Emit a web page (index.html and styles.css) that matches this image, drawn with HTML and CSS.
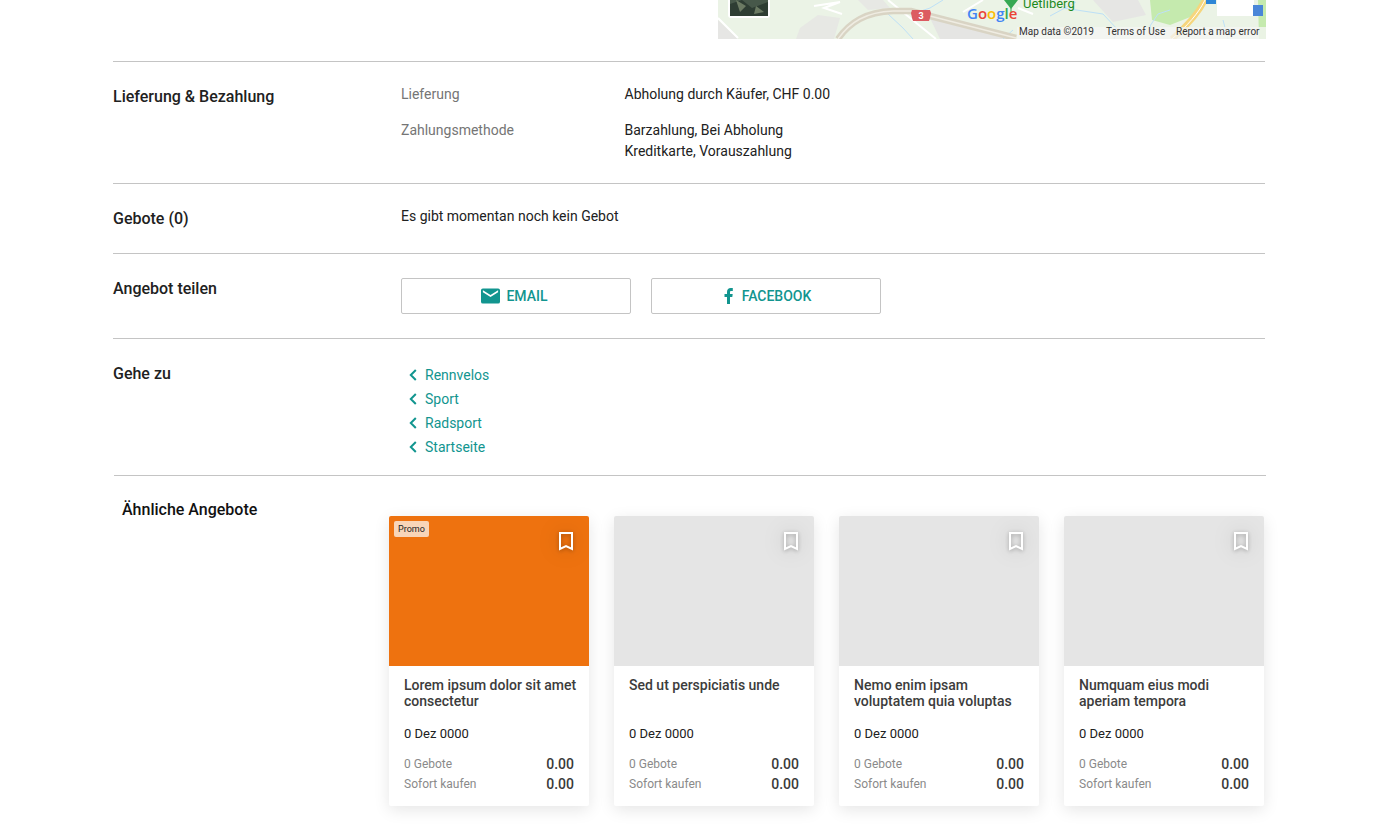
FILE: index.html
```html
<!DOCTYPE html>
<html lang="de">
<head>
    <meta charset="UTF-8">
    <title>Angebot</title>
    <link rel="stylesheet" href="styles.css">
</head>
<body>
    <div class="page">
        <div class="map-row">
            <svg class="map" width="548" height="39" viewBox="0 0 548 39">
                <rect width="548" height="39" fill="#ebf3e6"/>
                <!-- grey built up areas -->
                <path d="M0 20 L20 39 H0 Z" fill="#e6e6e4"/>
                <path d="M82 28 L100 15 L122 18 L116 39 H78 Z" fill="#e7e8e4"/>
                <path d="M212 18 L298 38 V39 H222 Z" fill="#e5e5e3"/>
                <path d="M140 0 H165 L172 8 L150 10 Z" fill="#e7e8e4"/>
                <path d="M375 0 H420 L428 15 L395 22 Z" fill="#e6e6e4"/>
                <path d="M432 0 H487 L480 14 L452 25 L434 20 Z" fill="#c5eaae"/>
                <path d="M540 0 H548 V39 H541 Z" fill="#c5eaae"/>
                <!-- small roads -->
                <path d="M0 18 L20 38 M96 6 L122 2 L106 8 L124 14 M170 0 L218 39 M315 14 L300 8 M265 0 L245 12" stroke="#fff" stroke-width="2" fill="none"/>
                <!-- rivers -->
                <path d="M170 14 L185 28 L195 39 M225 0 L212 8 L200 12 M332 16 L358 2 M345 8 L385 14 L400 30 L396 39 M295 30 L285 39 M438 39 L432 26 L440 14 L452 10 M505 20 L510 39" stroke="#bde0f7" stroke-width="1" fill="none"/>
                <!-- motorway -->
                <path d="M120 39 C132 22 148 12 175 11 L193 11 L212 16 L298 38" stroke="#d9d4c4" stroke-width="6.500" fill="none"/>
                <path d="M120 39 C132 22 148 12 175 11 L193 11 L212 16 L298 38" stroke="#efece2" stroke-width="1.500" fill="none"/>
                <path d="M454 39 C470 25 480 14 487 0" stroke="#f6d67d" stroke-width="6" fill="none"/>
                <path d="M454 39 C470 25 480 14 487 0" stroke="#fff" stroke-width="1" fill="none"/>
                <path d="M194 10 H212 L213 13 L212 18 L211 21 H195 L194 18 L193 13 Z" fill="#dc5b61"/>
                <text x="203" y="19" class="map-shield">3</text>
                <!-- satellite thumbnail -->
                <rect x="10" y="-4" width="42" height="22" rx="3" fill="#fff"/>
                <rect x="12" y="-3" width="38" height="19" fill="#47584a"/>
                <path d="M12 4 L24 0 L34 8 L50 2 V16 H12 Z" fill="#2e3d33"/>
                <path d="M18 0 L28 6 L22 12 Z M38 6 L46 12 L36 14 Z" fill="#6b7a63"/>
                <path d="M286 0 H300 L293 9 Z" fill="#36a852"/>
                <path d="M292.500 8 H293.500 V12 H292.500 Z" fill="#36a852"/>
                <text x="305" y="8" class="map-place">Uetliberg</text>
                <text x="249" y="19" class="map-logo"><tspan fill="#4285f4">G</tspan><tspan fill="#ea4335">o</tspan><tspan fill="#fbbc05">o</tspan><tspan fill="#4285f4">g</tspan><tspan fill="#34a853">l</tspan><tspan fill="#ea4335">e</tspan></text>
                <rect x="488" y="-2" width="10" height="6" fill="#2f86d6"/>
                <rect x="499" y="0" width="37" height="16" fill="#fff"/>
                <rect x="535" y="5" width="10" height="11" fill="#4a86d8"/>
                <rect x="299" y="27" width="249" height="12" fill="#f5f5f3" fill-opacity=".78"/>
                <text x="301" y="35" class="map-note">Map data ©2019</text>
                <text x="388" y="35" class="map-note">Terms of Use</text>
                <text x="458" y="35" class="map-note">Report a map error</text>
            </svg>
        </div>

        <section class="row row-delivery">
            <h3 class="row-title">Lieferung &amp; Bezahlung</h3>
            <dl class="facts">
                <dt>Lieferung</dt>
                <dd>Abholung durch Käufer, CHF 0.00</dd>
                <dt>Zahlungsmethode</dt>
                <dd>Barzahlung, Bei Abholung<br>Kreditkarte, Vorauszahlung</dd>
            </dl>
        </section>

        <section class="row row-bids">
            <h3 class="row-title">Gebote (0)</h3>
            <p class="plain">Es gibt momentan noch kein Gebot</p>
        </section>

        <section class="row row-share">
            <h3 class="row-title">Angebot teilen</h3>
            <div class="share-buttons">
                <a class="btn btn-mail" href="#">
                    <svg width="19" height="16" viewBox="0 0 20 16"><path d="M2 0H18A2 2 0 0 1 20 2V14A2 2 0 0 1 18 16H2A2 2 0 0 1 0 14V2A2 2 0 0 1 2 0ZM2 4L10 9L18 4V2L10 7L2 2Z" fill="#12958f"/></svg>
                    EMAIL
                </a>
                <a class="btn btn-fb" href="#">
                    <svg width="9" height="16" viewBox="0 0 9 16"><path d="M3 16V9H.5V6H3V4C3 1.500 4.500 0 6.700 0H8.800V3H7.300C6.300 3 6 3.400 6 4.300V6H8.700L8.300 9H6V16Z" fill="#12958f"/></svg>
                    FACEBOOK
                </a>
            </div>
        </section>

        <section class="row row-links">
            <h3 class="row-title">Gehe zu</h3>
            <ul class="crumbs">
                <li><a href="#"><svg width="8" height="12" viewBox="0 0 8 12"><path d="M6.800 1L1.800 6L6.800 11" fill="none" stroke="#12958f" stroke-width="2"/></svg>Rennvelos</a></li>
                <li><a href="#"><svg width="8" height="12" viewBox="0 0 8 12"><path d="M6.800 1L1.800 6L6.800 11" fill="none" stroke="#12958f" stroke-width="2"/></svg>Sport</a></li>
                <li><a href="#"><svg width="8" height="12" viewBox="0 0 8 12"><path d="M6.800 1L1.800 6L6.800 11" fill="none" stroke="#12958f" stroke-width="2"/></svg>Radsport</a></li>
                <li><a href="#"><svg width="8" height="12" viewBox="0 0 8 12"><path d="M6.800 1L1.800 6L6.800 11" fill="none" stroke="#12958f" stroke-width="2"/></svg>Startseite</a></li>
            </ul>
        </section>

        <section class="similar">
            <h3 class="similar-title">Ähnliche Angebote</h3>
            <div class="cards">
                <article class="card">
                    <div class="card-img promo">
                        <span class="badge">Promo</span>
                        <svg class="bookmark" width="16" height="19" viewBox="0 0 16 19"><path d="M2 1H14V17L8 14L2 17Z" fill="none" stroke="#fff" stroke-width="2"/></svg>
                    </div>
                    <div class="card-body">
                        <h4>Lorem ipsum dolor sit amet consectetur</h4>
                        <div class="date">0 Dez 0000</div>
                        <div class="price-row"><span>0 Gebote</span><b>0.00</b></div>
                        <div class="price-row"><span>Sofort kaufen</span><b>0.00</b></div>
                    </div>
                </article>
                <article class="card">
                    <div class="card-img">
                        <svg class="bookmark" width="16" height="19" viewBox="0 0 16 19"><path d="M2 1H14V17L8 14L2 17Z" fill="none" stroke="#fff" stroke-width="2"/></svg>
                    </div>
                    <div class="card-body">
                        <h4>Sed ut perspiciatis unde</h4>
                        <div class="date">0 Dez 0000</div>
                        <div class="price-row"><span>0 Gebote</span><b>0.00</b></div>
                        <div class="price-row"><span>Sofort kaufen</span><b>0.00</b></div>
                    </div>
                </article>
                <article class="card">
                    <div class="card-img">
                        <svg class="bookmark" width="16" height="19" viewBox="0 0 16 19"><path d="M2 1H14V17L8 14L2 17Z" fill="none" stroke="#fff" stroke-width="2"/></svg>
                    </div>
                    <div class="card-body">
                        <h4>Nemo enim ipsam voluptatem quia voluptas</h4>
                        <div class="date">0 Dez 0000</div>
                        <div class="price-row"><span>0 Gebote</span><b>0.00</b></div>
                        <div class="price-row"><span>Sofort kaufen</span><b>0.00</b></div>
                    </div>
                </article>
                <article class="card">
                    <div class="card-img">
                        <svg class="bookmark" width="16" height="19" viewBox="0 0 16 19"><path d="M2 1H14V17L8 14L2 17Z" fill="none" stroke="#fff" stroke-width="2"/></svg>
                    </div>
                    <div class="card-body">
                        <h4>Numquam eius modi aperiam tempora</h4>
                        <div class="date">0 Dez 0000</div>
                        <div class="price-row"><span>0 Gebote</span><b>0.00</b></div>
                        <div class="price-row"><span>Sofort kaufen</span><b>0.00</b></div>
                    </div>
                </article>
            </div>
        </section>
    </div>
</body>
</html>
```

FILE: styles.css
```css
* {
    box-sizing: border-box;
    margin: 0;
    padding: 0;
}

html, body {
    height: 825px;
    overflow: hidden;
}

body {
    background: white;
    color: #212121;
    font-family: Roboto, 'Liberation Sans', sans-serif;
    font-size: 14px;
}

a {
    color: #12958f;
    text-decoration: none;
}

.page {
    width: 1152px;
    margin-left: 113px;
}

.map-row {
    display: flex;
    justify-content: flex-end;
    height: 61px;
    margin-right: -1px;
}

.map {
    display: block;
}

.map-shield {
    fill: white;
    font-size: 9px;
    font-weight: 700;
    text-anchor: middle;
}

.map-place {
    fill: #1e8a1e;
    font-size: 13px;
}

.map-logo {
    font-size: 15px;
    font-weight: 600;
    font-family: 'Open Sans', sans-serif;
}

.map-note {
    fill: #333;
    font-size: 10px;
}

.row {
    display: flex;
    border-top: 1px solid #c4c4c4;
}

.row-title {
    width: 288px;
    flex-shrink: 0;
    padding-top: 25px;
    font-size: 16px;
    font-weight: 500;
    line-height: 20px;
}

.row-delivery {
    height: 122px;
}

.row-bids {
    height: 70px;
}

.row-share {
    height: 85px;
}

.row-links {
    height: 137px;
}

.facts {
    display: grid;
    grid-template-columns: 223.5px 1fr;
    align-content: start;
    row-gap: 15px;
    padding-top: 22px;
    line-height: 21px;
}

.facts dt {
    color: #757575;
}

.plain {
    padding-top: 22px;
    line-height: 21px;
}

.share-buttons {
    display: flex;
    gap: 20px;
    padding-top: 24px;
}

.btn {
    display: flex;
    align-items: center;
    justify-content: center;
    width: 230px;
    height: 36px;
    border: 1px solid #c4c4c4;
    border-radius: 2px;
    font-weight: 500;
}

.btn-mail {
    gap: 6px;
    padding-right: 3px;
}

.btn-fb {
    gap: 9px;
    padding-left: 3px;
}

.crumbs {
    list-style: none;
    padding-top: 24px;
}

.crumbs li {
    height: 24px;
}

.crumbs a {
    display: flex;
    align-items: center;
    height: 24px;
    gap: 8px;
    padding-left: 8px;
}

.similar {
    display: flex;
    border-top: 1px solid #c4c4c4;
    margin: 0 -1px 0 1px;
    height: 345px;
}

.similar-title {
    width: 275px;
    flex-shrink: 0;
    padding: 24px 0 0 8px;
    color: #111;
    font-size: 16px;
    font-weight: 500;
    line-height: 20px;
}

.cards {
    display: flex;
    gap: 25px;
    padding-top: 40px;
}

.card {
    width: 200px;
    height: 290px;
    border-radius: 2px;
    background: white;
    box-shadow: 0 4px 16px rgba(0,0,0,0.1);
    overflow: hidden;
}

.card-img {
    position: relative;
    height: 150px;
    background: #e5e5e5;
}

.promo {
    background: #ee720f;
}

.badge {
    position: absolute;
    left: 5px;
    top: 5px;
    padding: 0 4px;
    height: 16px;
    line-height: 16px;
    font-size: 9px;
    border-radius: 2px;
    background: #f8d5b8;
}

.bookmark {
    position: absolute;
    right: 15px;
    top: 16px;
    filter: drop-shadow(0 1px 2px rgba(0,0,0,0.3)) drop-shadow(0 0 10px rgba(0,0,0,0.2));
}

.card-body {
    padding: 11px 15px 0;
}

.card-body h4 {
    height: 40px;
    margin-right: -10px;
    font-size: 14px;
    font-weight: 500;
    line-height: 16px;
    color: #3c3c3c;
}

.date {
    margin-top: 9px;
    margin-bottom: 12px;
    font-size: 13px;
    line-height: 16px;
}

.price-row {
    display: flex;
    justify-content: space-between;
    align-items: center;
    height: 20px;
    font-size: 12px;
    color: #8a8a8a;
}

.price-row b {
    font-size: 14px;
    font-weight: 500;
    color: #3a3a3a;
}
```
